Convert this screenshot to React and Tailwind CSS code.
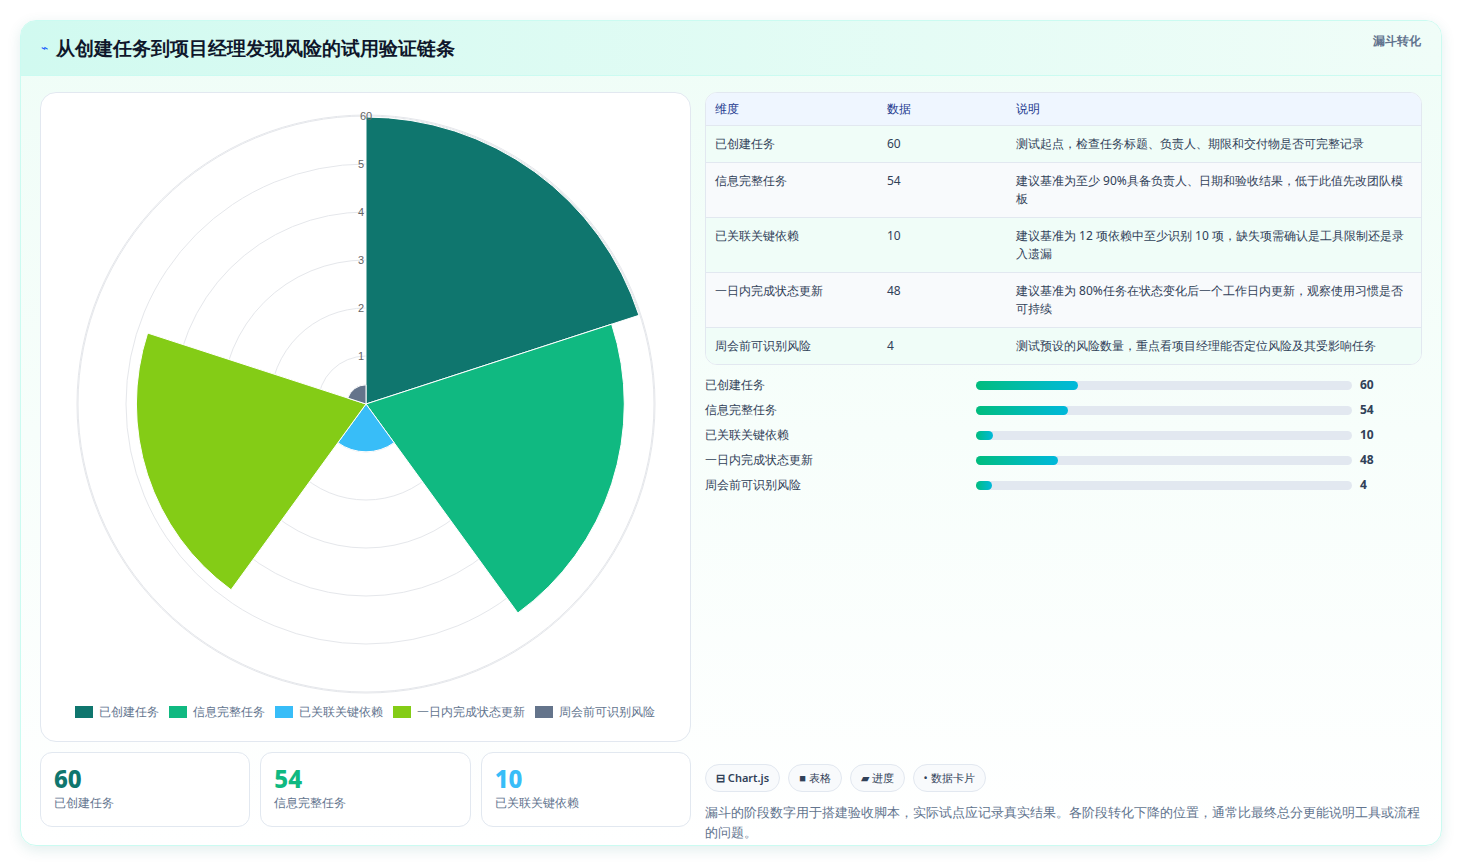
import React from "react";

const rows = [
  ["已创建任务", 60, "测试起点，检查任务标题、负责人、期限和交付物是否可完整记录"],
  ["信息完整任务", 54, "建议基准为至少 90%具备负责人、日期和验收结果，低于此值先改团队模板"],
  ["已关联关键依赖", 10, "建议基准为 12 项依赖中至少识别 10 项，缺失项需确认是工具限制还是录入遗漏"],
  ["一日内完成状态更新", 48, "建议基准为 80%任务在状态变化后一个工作日内更新，观察使用习惯是否可持续"],
  ["周会前可识别风险", 4, "测试预设的风险数量，重点看项目经理能否定位风险及其受影响任务"],
];
const colors = ["#0f766e", "#10b981", "#38bdf8", "#84cc16", "#64748b"];

function sector(cx, cy, r, a0, a1) {
  const rad = (a) => (a * Math.PI) / 180;
  const x0 = cx + r * Math.cos(rad(a0)), y0 = cy + r * Math.sin(rad(a0));
  const x1 = cx + r * Math.cos(rad(a1)), y1 = cy + r * Math.sin(rad(a1));
  return `M${cx},${cy} L${x0},${y0} A${r},${r} 0 0 1 ${x1},${y1} Z`;
}

function Polar() {
  const cx = 325, cy = 308, unit = 287 / 60;
  return (
    <svg width="650" height="600" className="block">
      {[1, 2, 3, 4, 5, 6].map((i) => (
        <circle key={i} cx={cx} cy={cy} r={i * 48} fill="none" stroke="#e5e7eb" strokeWidth="1" />
      ))}
      <circle cx={cx} cy={cy} r={289} fill="none" stroke="#e5e7eb" strokeWidth="1" />
      {rows.map((r, i) => (
        <path key={i} d={sector(cx, cy, r[1] * unit, -90 + i * 72, -18 + i * 72)} fill={colors[i]} stroke="#fff" strokeWidth="1" />
      ))}
      {["1", "2", "3", "4", "5", "60"].map((t, i) => (
        <text key={t} x={t === "60" ? cx : cx - 2} y={cy - (i + 1) * 48 + 4} fontSize="11" fill="#666" textAnchor={t === "60" ? "middle" : "end"} fontFamily="Liberation Sans, sans-serif">{t}</text>
      ))}
    </svg>
  );
}

export default function App() {
  return (
    <div className="w-[1462px] h-[866px] bg-white p-5 pt-5 pb-5 [font-family:Inter,'Noto_Sans_CJK_SC',sans-serif]">
      <div className="h-[826px] rounded-2xl border border-teal-100 overflow-hidden shadow-[0_4px_14px_rgba(15,118,110,0.12)] bg-gradient-to-b from-[#effdf7] to-white flex flex-col">
        <div className="h-[55px] bg-gradient-to-r from-[#d1faf0] to-[#f0fdf8] border-b border-teal-100 flex items-center justify-between px-5">
          <div className="flex items-center gap-2">
            <span className="text-blue-600 text-xs">⌁</span>
            <span className="text-[19px] font-bold text-slate-900">从创建任务到项目经理发现风险的试用验证链条</span>
          </div>
          <span className="text-xs font-semibold text-slate-500 self-start mt-3">漏斗转化</span>
        </div>
        <div className="flex gap-[14px] px-[19px] pt-4">
          <div className="w-[651px] flex flex-col gap-[10px]">
            <div className="h-[650px] bg-white rounded-2xl border border-slate-200 flex flex-col items-center pt-[3px]">
              <Polar />
              <div className="flex gap-2 mt-[8px] text-xs text-slate-500">
                {rows.map((r, i) => (
                  <div key={i} className="flex items-center gap-1.5 mr-0.5">
                    <span className="w-[18px] h-[12px] inline-block" style={{ background: colors[i] }} />
                    {r[0]}
                  </div>
                ))}
              </div>
            </div>
            <div className="grid grid-cols-3 gap-[10px]">
              {rows.slice(0, 3).map((r, i) => (
                <div key={i} className="h-[75px] rounded-xl border border-slate-200 bg-white px-[13px] pt-3">
                  <div className="text-[24px] font-extrabold leading-7" style={{ color: ["#0f766e", "#10b981", "#38bdf8"][i] }}>{r[1]}</div>
                  <div className="text-xs text-slate-500 mt-0.5">{r[0]}</div>
                </div>
              ))}
            </div>
          </div>
          <div className="flex-1 flex flex-col">
            <div className="rounded-xl border border-slate-200 overflow-hidden bg-white text-xs text-slate-700">
              <div className="grid grid-cols-[172px_129px_1fr] bg-[#eff6ff] text-blue-900 h-[33px] items-center px-[9px] border-b border-slate-200">
                <span>维度</span><span>数据</span><span>说明</span>
              </div>
              {rows.map((r, i) => (
                <div key={i} className={`grid grid-cols-[172px_129px_1fr] px-[9px] py-[9px] leading-[18px] border-b border-slate-200 last:border-b-0 ${i % 2 ? "bg-slate-50" : "bg-[#f0fdf8]"}`}>
                  <span>{r[0]}</span><span>{r[1]}</span><span className="pr-2">{r[2]}</span>
                </div>
              ))}
            </div>
            <div className="flex flex-col gap-[7px] mt-[11px]">
              {rows.map((r, i) => (
                <div key={i} className="flex items-center h-[18px] text-xs text-slate-700">
                  <span className="w-[271px]">{r[0]}</span>
                  <div className="w-[376px] h-[9px] rounded-full bg-slate-200">
                    <div className="h-full rounded-full bg-gradient-to-r from-emerald-500 to-cyan-500" style={{ width: `${r[1] * 102 / 60}px`, minWidth: 16 }} />
                  </div>
                  <span className="ml-2 font-bold">{r[1]}</span>
                </div>
              ))}
            </div>
            <div className="flex-1" />
            <div className="mt-[270px] flex gap-2 text-[11px] text-slate-700">
              {["⊟ Chart.js", "■ 表格", "▰ 进度", "• 数据卡片"].map((t, i) => (
                <span key={i} className={`h-[28px] px-[10px] rounded-full border border-slate-200 bg-slate-50 flex items-center ${i === 0 ? "font-semibold" : ""}`}>{t}</span>
              ))}
            </div>
            <p className="mt-[10px] text-[13px] leading-[20px] text-slate-500">漏斗的阶段数字用于搭建验收脚本，实际试点应记录真实结果。各阶段转化下降的位置，通常比最终总分更能说明工具或流程的问题。</p>
          </div>
        </div>
      </div>
    </div>
  );
}
